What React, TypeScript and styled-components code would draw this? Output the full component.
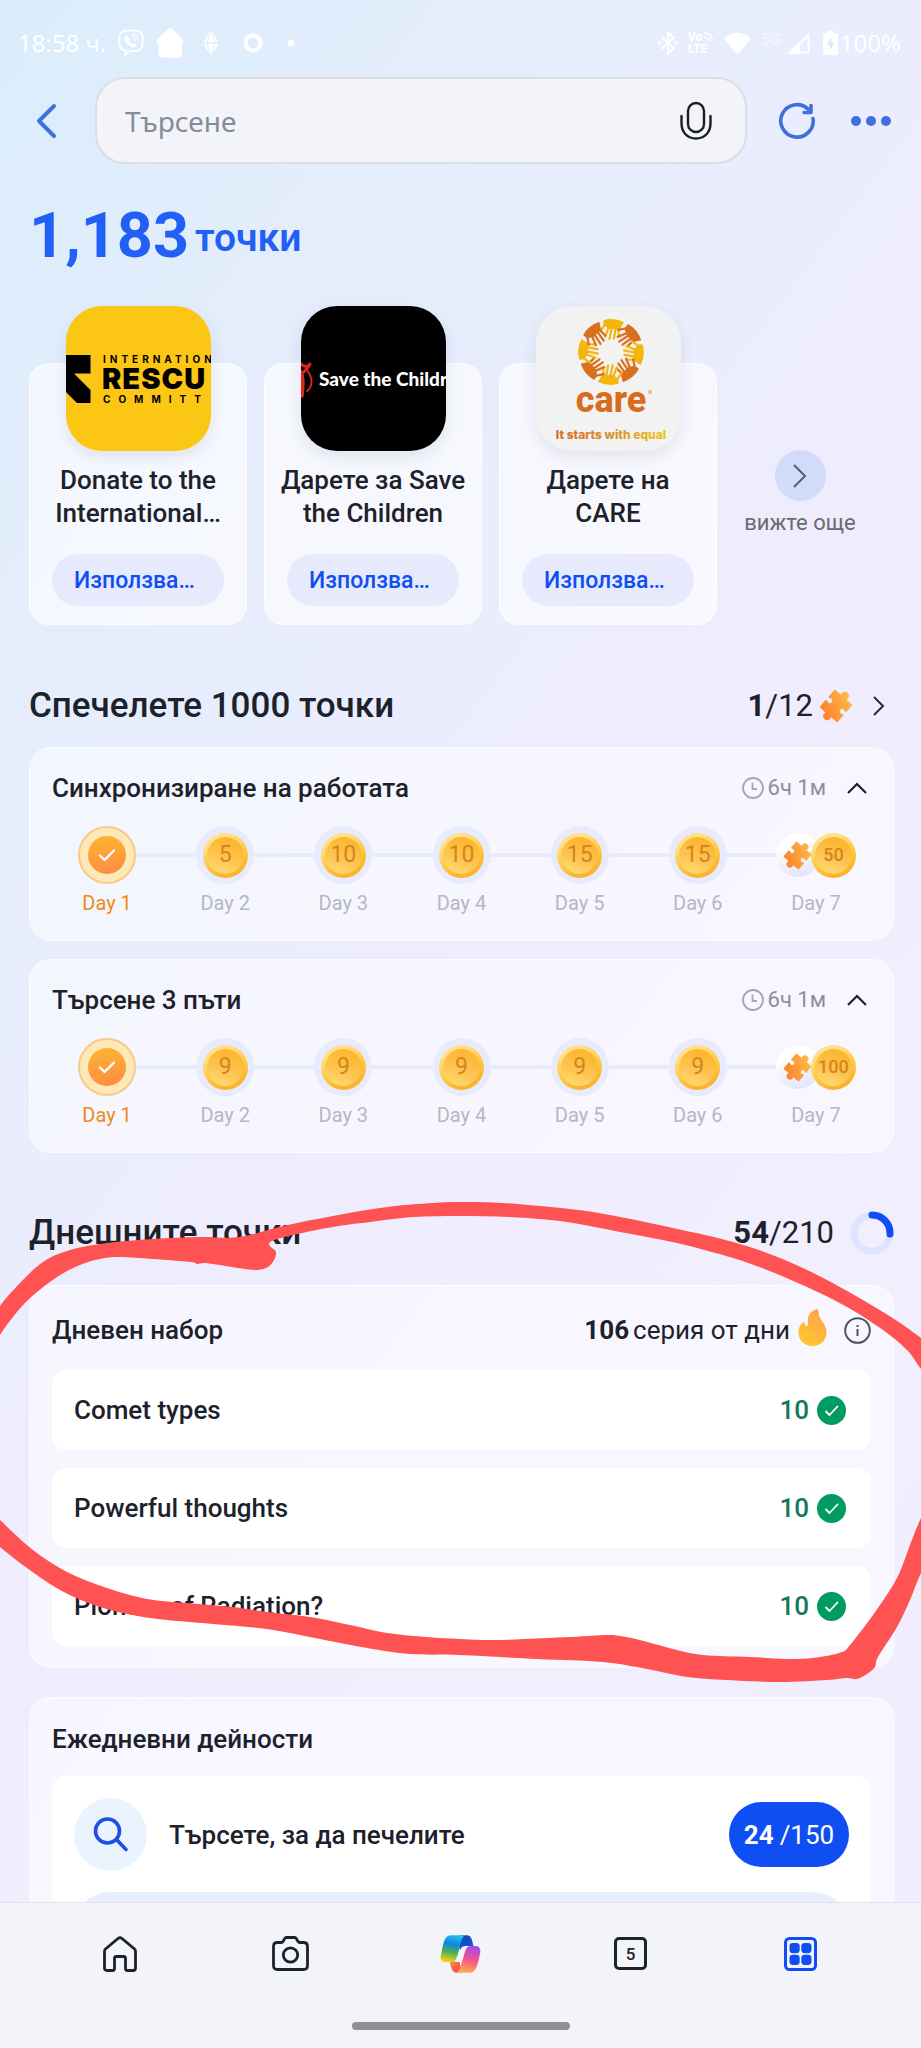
import React, { useId } from 'react';
import styled, { createGlobalStyle, css } from 'styled-components';

const ink = '#1d212b';
const blue = '#0f4ef2';
const lilac = '#e8ebfd';

const GlobalStyle = createGlobalStyle`
  *, *::before, *::after { box-sizing: border-box; }
  body {
    margin: 0;
    font-family: Roboto, "Noto Sans", sans-serif;
    color: ${ink};
  }
  h1, h2, h3, p, ul, ol { margin: 0; padding: 0; }
  ul, ol { list-style: none; }
  button, input { font: inherit; color: inherit; }
  button { border: 0; padding: 0; background: none; cursor: pointer; }
  svg { display: block; flex: none; }
`;

/* ---------- shell ---------- */

const Screen = styled.div`
  display: flex;
  flex-direction: column;
  height: 100vh;
  overflow: hidden;
  background: linear-gradient(127deg, #daedfb 0%, #e4edfc 20%, #eaedfd 38%, #efecfd 50%, #f1eefe 70%, #f0edfe 100%);
`;

const StatusBar = styled.div`
  display: flex;
  align-items: center;
  justify-content: space-between;
  padding: 27px 20px 18px 18px;
  color: #fff;
  font-family: "Noto Sans", sans-serif;
  font-size: 24px;
  line-height: 32px;
`;

const StatusGroup = styled.div<{ $gap: number; $left?: number }>`
  display: flex;
  align-items: center;
  gap: ${(p) => p.$gap}px;
  margin-left: ${(p) => p.$left ?? 0}px;
`;

const TopBar = styled.header`
  display: flex;
  align-items: stretch;
  height: 87px;
`;

const BackButton = styled.button`
  width: 95px;
  display: flex;
  align-items: center;
  padding-left: 34px;
`;

const SearchBox = styled.label`
  flex: 1;
  min-width: 0;
  display: flex;
  align-items: center;
  padding: 0 32px 0 26px;
  border: 2px solid #dcdde3;
  border-radius: 30px;
  background: #f3f4f9;
`;

const SearchInput = styled.input`
  flex: 1;
  min-width: 0;
  border: 0;
  outline: 0;
  background: none;
  font-family: "Noto Sans", sans-serif;
  font-size: 28px;
  &::placeholder { color: #858b9b; opacity: 1; }
`;

const TopActions = styled.div`
  display: flex;
  padding: 0 13px;
`;

const IconButton = styled.button`
  width: 74px;
  display: flex;
  align-items: center;
  justify-content: center;
`;

const Main = styled.main`
  flex: 1;
  min-height: 0;
  padding-top: 36px;
  overflow-x: hidden;
  overflow-y: auto;
  scrollbar-width: none;
`;

const Section = styled.section<{ $top: number }>`
  position: relative;
  margin-top: ${(p) => p.$top}px;
  padding: 0 27px 0 29px;
`;

/* ---------- points and offers ---------- */

const Points = styled.h1`
  display: flex;
  align-items: center;
  gap: 6px;
  padding: 0 29px;
  color: #215ff6;
  font-size: 63px;
  line-height: 72px;
  font-weight: 700;
`;

const PointsUnit = styled.span`
  font-size: 39px;
  line-height: 48px;
  padding-top: 4px;
  font-weight: 600;
`;

const Offers = styled.div`
  display: flex;
  gap: 17px;
`;

const Offer = styled.article`
  flex: 0 0 218px;
  margin-top: 57px;
  padding: 0 13px 18px;
  display: flex;
  flex-direction: column;
  align-items: center;
  border: 1px solid rgba(255, 255, 255, 0.6);
  border-radius: 20px;
  background: rgba(255, 255, 255, 0.62);
`;

const Logo = styled.div<{ $bg: string }>`
  width: 145px;
  height: 145px;
  margin-top: -58px;
  border-radius: 36px;
  overflow: hidden;
  background: ${(p) => p.$bg};
  box-shadow: 0 6px 16px rgba(40, 50, 100, 0.1);
`;

const OfferTitle = styled.h3`
  width: 190px;
  height: 66px;
  margin-top: 13px;
  text-align: center;
  font-size: 26px;
  line-height: 33px;
  font-weight: 500;
`;

const OfferButton = styled.button`
  align-self: stretch;
  height: 52px;
  margin: 24px 9px 0;
  padding: 0 22px;
  border-radius: 26px;
  background: #e7eafd;
  color: ${blue};
  font-size: 23px;
  font-weight: 500;
  text-align: left;
`;

const SeeMore = styled.a`
  flex: 1;
  min-width: 0;
  margin-top: 144px;
  padding-right: 28px;
  display: flex;
  flex-direction: column;
  align-items: center;
  gap: 8px;
  color: #6a6a6e;
  font-size: 22px;
  line-height: 28px;
  text-decoration: none;
  white-space: nowrap;
`;

const SeeMoreCircle = styled.span`
  display: grid;
  place-items: center;
  width: 51px;
  height: 51px;
  border-radius: 50%;
  background: #d3dbfa;
`;

/* ---------- shared headings and panels ---------- */

const SectionHead = styled.div`
  display: flex;
  align-items: center;
  justify-content: space-between;
  height: 44px;
`;

const SectionTitle = styled.h2`
  font-size: 35px;
  line-height: 44px;
  font-weight: 500;
`;

const Tally = styled.div<{ $gap: number; $right?: number }>`
  display: flex;
  align-items: center;
  gap: ${(p) => p.$gap}px;
  padding-right: ${(p) => p.$right ?? 0}px;
  font-size: 31px;
  line-height: 40px;
  b { font-weight: 700; }
`;

const ChevronButton = styled.button<{ $left: number }>`
  margin-left: ${(p) => p.$left}px;
`;

const Panel = styled.div<{ $top: number; $pad: string }>`
  margin-top: ${(p) => p.$top}px;
  padding: ${(p) => p.$pad};
  border: 1px solid rgba(255, 255, 255, 0.6);
  border-radius: 22px;
  background: rgba(255, 255, 255, 0.5);
`;

const PanelHead = styled.div`
  display: flex;
  align-items: center;
  justify-content: space-between;
  height: 32px;
`;

const PanelTitle = styled.h3`
  font-size: 26px;
  line-height: 32px;
  font-weight: 500;
`;

const TimeLeft = styled.div`
  display: flex;
  align-items: center;
  gap: 4px;
  padding-right: 4px;
  color: #8b8f9e;
  font-size: 22px;
  line-height: 32px;
`;

/* ---------- day track ---------- */

const Track = styled.ol`
  display: grid;
  grid-template-columns: repeat(7, 1fr);
  margin: 22px -4px 0;
`;

const DayMarker = styled.div`
  display: flex;
  align-items: center;
  justify-content: center;
  height: 58px;
`;

const Rail = styled.span<{ $hidden?: boolean }>`
  flex: 1;
  height: 4px;
  background: ${(p) => (p.$hidden ? 'transparent' : lilac)};
`;

const Halo = styled.span<{ $done?: boolean }>`
  display: grid;
  place-items: center;
  width: 58px;
  height: 58px;
  border-radius: 50%;
  background: ${lilac};
  ${(p) => p.$done && css`
    background: #fde8b8;
    border: 2px solid #fbc987;
  `}
`;

const DoneDisc = styled.span`
  display: grid;
  place-items: center;
  width: 38px;
  height: 38px;
  border-radius: 50%;
  background: linear-gradient(170deg, #fdb52f, #ff8a45);
`;

const Coin = styled.span<{ $small?: boolean }>`
  position: relative;
  display: grid;
  place-items: center;
  width: 45px;
  height: 45px;
  border-radius: 50%;
  background: linear-gradient(155deg, #ffe08a 20%, #ffc93f 55%, #fdb32c 80%);
  color: #d5851d;
  font-size: ${(p) => (p.$small ? 18 : 23)}px;
  line-height: 32px;
  font-weight: ${(p) => (p.$small ? 500 : 400)};
  &::before {
    content: "";
    position: absolute;
    inset: 4px;
    border-radius: 50%;
    background: linear-gradient(200deg, #fdb733 20%, #fec553 60%, #ffda70 90%);
  }
  span { position: relative; }
`;

const PuzzleDisc = styled.span`
  display: grid;
  place-items: center;
  width: 44px;
  height: 44px;
  margin-right: -9px;
  border-radius: 50%;
  background: linear-gradient(165deg, #ffffff 30%, #dfe3f7 95%);
`;

const DayLabel = styled.p<{ $active?: boolean }>`
  margin-top: 7px;
  text-align: center;
  font-size: 20px;
  line-height: 24px;
  color: ${(p) => (p.$active ? '#f08a16' : '#b5b7c3')};
`;

/* ---------- daily set ---------- */

const Streak = styled.div`
  display: flex;
  align-items: center;
  gap: 4px;
  font-size: 26px;
  line-height: 32px;
  b { font-weight: 700; }
`;

const FlameSlot = styled.span`
  padding: 0 13px 6px 4px;
`;

const TaskList = styled.ul`
  display: flex;
  flex-direction: column;
  gap: 18px;
  margin-top: 24px;
`;

const Task = styled.li`
  display: flex;
  align-items: center;
  justify-content: space-between;
  height: 80px;
  padding: 0 25px 0 22px;
  border-radius: 14px;
  background: #fff;
  font-size: 26px;
  line-height: 32px;
  font-weight: 500;
`;

const Earned = styled.span`
  display: flex;
  align-items: center;
  gap: 8px;
  color: #127a5b;
`;

const Marker = styled.svg`
  position: absolute;
  left: 0;
  top: -31px;
  width: 100%;
  pointer-events: none;
`;

/* ---------- activities ---------- */

const ActivityBox = styled.div`
  margin-top: 21px;
  padding: 22px 22px 40px;
  border-radius: 14px;
  background: #fff;
`;

const ActivityRow = styled.div`
  display: flex;
  align-items: center;
  gap: 22px;
  font-size: 26px;
  line-height: 32px;
  font-weight: 500;
`;

const ActivityIcon = styled.span`
  display: grid;
  place-items: center;
  width: 73px;
  height: 73px;
  border-radius: 50%;
  background: #e9f4ff;
`;

const ActivityName = styled.p`
  flex: 1;
`;

const Score = styled.span`
  display: flex;
  align-items: center;
  justify-content: center;
  gap: 6px;
  width: 120px;
  height: 65px;
  border-radius: 33px;
  background: ${blue};
  color: #fff;
  font-weight: 400;
  b { font-weight: 700; }
`;

const ActivityDetail = styled.div`
  height: 120px;
  margin-top: 21px;
  border-radius: 36px;
  background: #e8effc;
`;

/* ---------- bottom navigation ---------- */

const BottomBar = styled.footer`
  display: flex;
  flex-direction: column;
  align-items: center;
  height: 146px;
  border-top: 1px solid #e3e4e9;
  background: #f3f4f9;
`;

const Nav = styled.nav`
  align-self: stretch;
  display: grid;
  grid-template-columns: repeat(5, 1fr);
  height: 101px;
  padding: 0 35px;
`;

const NavButton = styled.button`
  display: grid;
  place-items: center;
`;

const TabCount = styled.span`
  display: grid;
  place-items: center;
  width: 33px;
  height: 33px;
  border: 3px solid ${ink};
  border-radius: 5px;
  font-size: 17px;
  line-height: 20px;
  font-weight: 500;
`;

const HomeHandle = styled.span`
  width: 218px;
  height: 8px;
  margin-top: 18px;
  border-radius: 4px;
  background: #8e9092;
`;

/* ---------- drawings ---------- */

const ViberIcon = () => (
  <svg width="26" height="28" viewBox="0 0 28 30" fill="none" stroke="#fff" strokeWidth="2">
    <path d="M9 1.500H19Q26.500 2 26.500 9V15Q26.500 23 19 23.500H13L8 28V23Q1.500 22 1.500 15V9Q1.500 2 9 1.500Z" />
    <path d="M9 7C6 9 7 12 10 15.500C13 19 17 21 20 18L17 15.500L15 16.500C13.500 16 12 14 11.500 12.500L12.500 10.500Z" fill="#fff" strokeWidth="1" />
    <path d="M15 6C19 6.500 21.500 9 22 13M15 9C17.500 9.500 18.500 11 19 13" strokeWidth="1.200" />
  </svg>
);

const HomeFilled = () => (
  <svg width="28" height="30" viewBox="0 0 28 30" fill="#fff">
    <path d="M11.500 1.200Q14-1 16.500 1.200L26.500 11Q28.500 14 26 15.500V25Q26 29.500 22 29.500H6.500Q2.500 29.500 2.500 25V16.500Q-1 15 1.500 11Z" />
  </svg>
);

const GemIcon = () => (
  <svg width="16" height="26" viewBox="0 0 16 26" fill="#fff">
    <path d="M7.500 0L3.500 12H0.500ZM8.500 0L12.500 12H15.500ZM8 1L11.300 12H4.700ZM0.500 13.500H3.500L7.500 26ZM15.500 13.500H12.500L8.500 26ZM4.700 13.500H11.300L8 25Z" />
  </svg>
);

const RingIcon = () => (
  <svg width="20" height="20" viewBox="0 0 20 20" fill="none" stroke="#fff" strokeWidth="4">
    <circle cx="10" cy="10" r="7.500" />
  </svg>
);

const DotIcon = () => (
  <svg width="8" height="8" viewBox="0 0 8 8" fill="#fff"><circle cx="4" cy="4" r="3.500" /></svg>
);

const BluetoothIcon = () => (
  <svg width="20" height="24" viewBox="0 0 20 24" fill="none" stroke="#fff" strokeWidth="2.200">
    <path d="M3.500 6L16 17.500L10 22V2L16 6.500L3.500 18" />
    <circle cx="1.500" cy="12" r="0.700" />
    <circle cx="18" cy="12" r="0.700" />
  </svg>
);

const VolteIcon = () => (
  <svg width="26" height="28" viewBox="0 0 26 28" fill="#fff" fontFamily="Roboto, sans-serif" fontWeight="700" fontSize="12">
    <text x="0" y="12">Vo</text>
    <text x="0" y="24">LTE</text>
    <path d="M16 4C21 4 24 7 24.500 12M16 8C19 8 20.500 10 21 12" fill="none" stroke="#fff" strokeWidth="1.600" />
  </svg>
);

const WifiIcon = () => (
  <svg width="27" height="23" viewBox="0 0 27 23" fill="#fff">
    <path d="M0 6.500Q13.500-5 27 6.500L13.500 23Z" />
  </svg>
);

const SignalIcon = () => (
  <svg width="50" height="28" viewBox="0 0 50 28">
    <text x="0" y="16" fill="#f4f4fd" fontFamily="Roboto, sans-serif" fontSize="16" fontWeight="500">5G</text>
    <path d="M47.500 6V23.500H29.500Z" fill="none" stroke="#fff" strokeWidth="2" />
    <path d="M26 25L39 12V25Z" fill="#fff" />
  </svg>
);

const BatteryIcon = () => (
  <svg width="15" height="24" viewBox="0 0 15 24">
    <path d="M4 0H11V2H13Q15 2 15 4V22Q15 24 13 24H2Q0 24 0 22V4Q0 2 2 2H4Z" fill="#fff" />
    <path d="M8.500 6L4 14H7V19L11.500 11.500H8.500Z" fill="#dfe3fb" />
  </svg>
);

const BackIcon = () => (
  <svg width="24" height="38" viewBox="0 0 24 38" fill="none" stroke="#3f70de" strokeWidth="4" strokeLinecap="round" strokeLinejoin="round">
    <path d="M20 4L5 19L20 34" />
  </svg>
);

const MicIcon = () => (
  <svg width="34" height="40" viewBox="0 0 34 40" fill="none" stroke="#1b1e26" strokeWidth="2.400" strokeLinecap="round">
    <rect x="9" y="2" width="16" height="29" rx="8" />
    <path d="M2.500 15V22C2.500 32 9 37.500 17 37.500S31.500 32 31.500 22V15" />
  </svg>
);

const RefreshIcon = () => (
  <svg width="38" height="38" viewBox="0 0 38 38" fill="none" stroke="#3f70de" strokeWidth="3.600" strokeLinecap="round" strokeLinejoin="round">
    <path d="M35 16.500A16.200 16.200 0 1 1 30 7" />
    <path d="M33 3.500V10.500H26" />
  </svg>
);

const MoreIcon = () => (
  <svg width="40" height="10" viewBox="0 0 40 10" fill="#3f70de">
    <circle cx="5" cy="5" r="5" /><circle cx="20" cy="5" r="5" /><circle cx="35" cy="5" r="5" />
  </svg>
);

const ChevronRight = ({ w, h, color, stroke }: { w: number; h: number; color: string; stroke: number }) => (
  <svg width={w} height={h} viewBox={`0 0 ${w} ${h}`} fill="none" stroke={color} strokeWidth={stroke}>
    <path d={`M1 1L${w - 2} ${h / 2}L1 ${h - 1}`} />
  </svg>
);

const ChevronUp = () => (
  <svg width="20" height="12" viewBox="0 0 20 12" fill="none" stroke={ink} strokeWidth="2.200">
    <path d="M1 11L10 2L19 11" />
  </svg>
);

const ClockIcon = () => (
  <svg width="22" height="22" viewBox="0 0 22 22" fill="none" stroke="#a3a6b3" strokeWidth="1.800">
    <circle cx="11" cy="11" r="10" />
    <path d="M10.500 5.500V12H15" />
  </svg>
);

const CheckIcon = ({ size, stroke }: { size: number; stroke: number }) => (
  <svg width={size} height={size} viewBox="0 0 18 18" fill="none" stroke="#fff" strokeWidth={stroke} strokeLinecap="round" strokeLinejoin="round">
    <path d="M2 9.500L6.500 14L16 4.500" />
  </svg>
);

const PuzzleIcon = ({ size }: { size: number }) => {
  const id = useId();
  return (
    <svg width={size} height={size} viewBox="0 0 24 24">
      <defs>
        <linearGradient id={id} gradientUnits="userSpaceOnUse" x1="5" y1="18" x2="14" y2="2">
          <stop offset="0" stopColor="#fd8730" />
          <stop offset="1" stopColor="#fdb544" />
        </linearGradient>
      </defs>
      <path
        transform="rotate(41 12 12)"
        fill={`url(#${id})`}
        stroke={`url(#${id})`}
        strokeWidth="1"
        strokeLinejoin="round"
        d="M4.200 4.200H10.200C10.200 3.600 9.700 3.300 9.700 2.500A2.300 2.300 0 0 1 14.300 2.500C14.300 3.300 13.800 3.600 13.800 4.200H19.800V10.300C18.900 10.300 18.600 9.800 17.800 9.800A2.200 2.200 0 0 0 17.800 14.200C18.600 14.200 18.900 13.700 19.800 13.700V19.800H13.800C13.800 20.400 14.300 20.700 14.300 21.500A2.300 2.300 0 0 1 9.700 21.500C9.700 20.700 10.200 20.400 10.200 19.800H4.200V13.700C5.100 13.700 5.400 14.200 6.200 14.200A2.200 2.200 0 0 0 6.200 9.800C5.400 9.800 5.100 10.300 4.200 10.300Z"
      />
    </svg>
  );
};

const ProgressRing = ({ value }: { value: number }) => (
  <svg width="44" height="44" viewBox="0 0 44 44" fill="none" strokeWidth="7">
    <circle cx="22" cy="22" r="18" stroke="#e0e3fd" />
    <circle cx="22" cy="22" r="18" stroke={blue} strokeLinecap="round" pathLength={100} strokeDasharray={`${value} 100`} transform="rotate(-90 22 22)" />
  </svg>
);

const FlameIcon = () => (
  <svg width="29" height="37" viewBox="0 0 29 37">
    <defs>
      <linearGradient id="flame" x1="0.700" y1="0" x2="0.200" y2="1">
        <stop offset="0" stopColor="#ffa24a" />
        <stop offset="1" stopColor="#ffc92b" />
      </linearGradient>
    </defs>
    <path fill="url(#flame)" d="M18 0.500C20 0 20.500 1 20.500 3C21 12 28.500 14 28.500 23C28.500 31.500 22.500 37 14.500 37S0.500 31.500 0.500 23.500C0.500 19 2 15.500 5 13.500C6.500 12.800 7 13.800 7 15C7.200 17 8.500 17.500 9.500 16.500C10.800 15 9.500 13 9.800 10C10.300 5 14 1.500 18 0.500Z" />
  </svg>
);

const InfoIcon = () => (
  <svg width="27" height="27" viewBox="0 0 27 27" fill="none" stroke="#4d5366" strokeWidth="2">
    <circle cx="13.500" cy="13.500" r="12.300" />
    <path d="M13.500 12V19M13.500 8V10" />
  </svg>
);

const GreenCheck = () => (
  <svg width="29" height="29" viewBox="0 0 29 29">
    <circle cx="14.500" cy="14.500" r="14.500" fill="#009a63" />
    <path d="M9 15.500L12.500 19L20.500 10.500" fill="none" stroke="#fff" strokeWidth="1.800" strokeLinecap="round" strokeLinejoin="round" />
  </svg>
);

const SearchIcon = () => (
  <svg width="42" height="42" viewBox="0 0 42 42" fill="none" stroke="#1b4fe8" strokeWidth="3.600" strokeLinecap="round">
    <circle cx="17.500" cy="17" r="12" />
    <path d="M26.500 25.500L36 35.500" />
  </svg>
);

const HomeIcon = () => (
  <svg width="34" height="36" viewBox="0 0 34 36" fill="none" stroke={ink} strokeWidth="2.800" strokeLinejoin="round">
    <path d="M15 2.500Q17 1 19 2.500L31.500 13Q32.500 14 32.500 15.500V32Q32.500 34.500 30 34.500H24.500Q22.500 34.500 22.500 32.500V22.500Q22.500 20.500 20.500 20.500H13.500Q11.500 20.500 11.500 22.500V32.500Q11.500 34.500 9.500 34.500H4Q1.500 34.500 1.500 32V15.500Q1.500 14 2.500 13Z" />
  </svg>
);

const CameraIcon = () => (
  <svg width="37" height="35" viewBox="0 0 37 35" fill="none" stroke={ink} strokeWidth="2.800" strokeLinejoin="round">
    <path d="M5.500 6.500H9Q10.500 6.500 11.300 5L12.500 2.800Q13.200 1.500 14.500 1.500H22.500Q23.800 1.500 24.500 2.800L25.700 5Q26.500 6.500 28 6.500H31.500Q35.500 6.500 35.500 10.500V29.500Q35.500 33.500 31.500 33.500H5.500Q1.500 33.500 1.500 29.500V10.500Q1.500 6.500 5.500 6.500Z" />
    <circle cx="18.500" cy="19" r="7.200" />
  </svg>
);

const CopilotIcon = () => (
  <svg width="41" height="38" viewBox="-1 -1 122 114">
    <defs>
      <linearGradient id="cpLeft" x1="0.600" y1="0" x2="0.400" y2="1">
        <stop offset="0" stopColor="#22c0f4" /><stop offset="0.350" stopColor="#0f86dc" />
        <stop offset="0.650" stopColor="#4fb056" /><stop offset="1" stopColor="#f8cf0c" />
      </linearGradient>
      <linearGradient id="cpRight" x1="0.600" y1="0" x2="0.400" y2="1">
        <stop offset="0" stopColor="#a44bea" /><stop offset="0.500" stopColor="#f2558c" /><stop offset="1" stopColor="#ffad4b" />
      </linearGradient>
      <linearGradient id="cpTop" x1="0" y1="0" x2="1" y2="1">
        <stop offset="0" stopColor="#0c3fae" /><stop offset="1" stopColor="#1a63e0" />
      </linearGradient>
      <linearGradient id="cpBottom" x1="0" y1="0" x2="1" y2="1">
        <stop offset="0" stopColor="#fb9340" /><stop offset="1" stopColor="#ee3f4f" />
      </linearGradient>
    </defs>
    <path fill="url(#cpTop)" d="M58 0H79C92 0 95 14 99 32H82C70 32 66 38 60 46L50 20Z" />
    <path fill="url(#cpBottom)" d="M27 78C32 95 34 112 46 112H62L58 80Z" />
    <path fill="url(#cpLeft)" d="M30 0H76C66 2 63 14 56 42C50 62 48 80 34 80H14C2 80 -2 72 2 56C8 30 10 0 30 0Z" />
    <path fill="url(#cpRight)" d="M104 32C118 32 122 42 118 58C112 84 108 112 88 112H44C56 110 60 96 67 70C72 50 75 32 88 32Z" />
    <path fill="#f6f2fb" d="M76 32H86C76 36 73 50 69 64C66 76 60 81 48 80C54 70 56 54 60 42C63 35 68 32 76 32Z" />
  </svg>
);

const AppsIcon = () => (
  <svg width="33" height="34" viewBox="0 0 33 34">
    <rect x="1.500" y="1.500" width="30" height="31" rx="4" fill="none" stroke={blue} strokeWidth="3" />
    <g fill={blue}>
      <rect x="5.500" y="6" width="10.200" height="10.200" rx="3.400" />
      <rect x="17.300" y="6" width="10.200" height="10.200" rx="3.400" />
      <rect x="5.500" y="17.800" width="10.200" height="10.200" rx="3.400" />
      <rect x="17.300" y="17.800" width="10.200" height="10.200" rx="3.400" />
    </g>
  </svg>
);

const RescueLogo = () => (
  <svg width="145" height="145" viewBox="0 0 145 145" fontFamily="Inter, sans-serif">
    <path d="M0 49H24.500V67.500H8L24.500 84V97H11L0 86Z" />
    <text x="37" y="57" fontSize="10" fontWeight="700" letterSpacing="4">INTERNATION</text>
    <text x="36" y="83" fontSize="29" fontWeight="900" letterSpacing="1">RESCU</text>
    <text x="37" y="97" fontSize="10" fontWeight="700" letterSpacing="8">COMMITT</text>
  </svg>
);

const SaveLogo = () => (
  <svg width="145" height="145" viewBox="0 0 145 145">
    <g fill="none" stroke="#e0261c" strokeLinecap="round">
      <path d="M-2 56C3 62 7 61 9 58" strokeWidth="3" />
      <path d="M0 68C4 66 6 62 8 60" strokeWidth="3" />
      <path d="M6 64C12 72 12 80 6 85" strokeWidth="1.800" />
      <path d="M0 66C3 72 2 82 1 90" strokeWidth="3.500" />
    </g>
    <text x="18" y="80" fill="#fff" fontFamily="Lato, sans-serif" fontSize="19" fontWeight="900">Save the Childr</text>
  </svg>
);

const CareLogo = () => (
  <svg width="145" height="145" viewBox="0 0 145 145">
    <defs>
      <linearGradient id="careText" x1="0" y1="0" x2="1" y2="0">
        <stop offset="0" stopColor="#d96b1c" /><stop offset="0.600" stopColor="#dc9a2a" /><stop offset="1" stopColor="#ecc317" />
      </linearGradient>
    </defs>
    {Array.from({ length: 8 }, (_, i) => {
      const c = i % 2 ? '#db701c' : '#f3b50e';
      return (
        <g key={i} transform={`translate(75 46) rotate(${i * 45 + 4})`} fill={c} stroke={c} strokeLinecap="round">
          <path d="M-10 -31Q0 -35 11 -30.500L7 -23L-4 -23L-9 -26Z" stroke="none" />
          <path d="M-4 -24L-7 -15M-1 -24L-2.500 -13M3 -24L2 -13.500M6 -25L6.500 -16M-8 -27L-12 -20" strokeWidth="2.200" fill="none" />
        </g>
      );
    })}
    <text x="75" y="106" textAnchor="middle" fill="#d96b1c" fontFamily="Roboto, sans-serif" fontSize="36" fontWeight="800">care</text>
    <circle cx="114" cy="86" r="2" fill="#eab68d" />
    <text x="75" y="133" textAnchor="middle" fill="url(#careText)" fontFamily="Inter, sans-serif" fontSize="12" fontWeight="800">It starts with equal</text>
  </svg>
);

/* Closed smooth outline through the given points (Catmull-Rom to Bezier). */
type Pt = [number, number];
const smooth = (pts: Pt[]) => {
  const n = pts.length;
  const at = (i: number) => pts[(i + n) % n];
  let d = `M${pts[0][0]} ${pts[0][1]}`;
  for (let i = 0; i < n; i++) {
    const [a, b, c, e] = [at(i - 1), at(i), at(i + 1), at(i + 2)];
    d += `C${b[0] + (c[0] - a[0]) / 6} ${b[1] + (c[1] - a[1]) / 6} ${c[0] - (e[0] - b[0]) / 6} ${c[1] - (e[1] - b[1]) / 6} ${c[0]} ${c[1]}`;
  }
  return `${d}Z`;
};

const upperStroke: Pt[] = [
  [-20, 158], [0, 126], [20, 103], [43, 82], [70, 70], [107, 63], [153, 59], [200, 57], [240, 57], [283, 46], [333, 36],
  [387, 27], [433, 23], [460, 22], [503, 23], [570, 29], [610, 35], [673, 48], [733, 62], [780, 78], [827, 100],
  [883, 132], [921, 158], [945, 180], [945, 220], [921, 189], [907, 170], [883, 150], [847, 127], [807, 107],
  [767, 90], [733, 78], [677, 63], [620, 52], [567, 42], [510, 37], [460, 36], [413, 37], [370, 42], [327, 48],
  [272, 61], [276, 72], [274, 80], [268, 87], [258, 90], [245, 89], [213, 84], [203, 83], [197, 84], [191, 82], [153, 79],
  [120, 77], [100, 79], [80, 85], [57, 97], [30, 118], [13, 137], [0, 155], [-20, 188],
];

const lowerStroke: Pt[] = [
  [-20, 348], [0, 367], [27, 388], [60, 410], [100, 427], [150, 438], [213, 444], [267, 449], [320, 459], [367, 468],
  [410, 474], [460, 475], [537, 479], [603, 482], [647, 489], [687, 497], [727, 500], [780, 502], [827, 500],
  [847, 498], [857, 499], [867, 494], [875, 487], [878, 477], [897, 447], [910, 420], [921, 393], [945, 345],
  [945, 290], [921, 338], [910, 365], [897, 398], [873, 435], [850, 465], [842, 472], [820, 477], [793, 479],
  [750, 477], [703, 475], [673, 469], [640, 460], [620, 456], [607, 455], [570, 457], [497, 460], [460, 459],
  [427, 457], [387, 453], [350, 445], [310, 437], [267, 432], [233, 427], [187, 423], [147, 419], [107, 408],
  [67, 392], [33, 370], [0, 340], [-20, 320],
];

const RedCircle = () => (
  <Marker viewBox="0 0 921 520" aria-hidden="true" fill="#ff5252">
    <path d={smooth(upperStroke)} />
    <path d={smooth(lowerStroke)} />
  </Marker>
);

/* ---------- data ---------- */

const offers = [
  { title: 'Donate to the International…', bg: '#fcc615', logo: <RescueLogo /> },
  { title: 'Дарете за Save the Children', bg: '#000', logo: <SaveLogo /> },
  { title: 'Дарете на CARE', bg: '#f2f2f3', logo: <CareLogo /> },
];

const streaks = [
  { title: 'Синхронизиране на работата', days: [0, 5, 10, 10, 15, 15, 50], top: 19 },
  { title: 'Търсене 3 пъти', days: [0, 9, 9, 9, 9, 9, 100], top: 18 },
];

const tasks = ['Comet types', 'Powerful thoughts', 'Pioneer of Radiation?'];

const StreakPanel = ({ title, days, top }: { title: string; days: number[]; top: number }) => (
  <Panel $top={top} $pad="24px 22px 25px">
    <PanelHead>
      <PanelTitle>{title}</PanelTitle>
      <TimeLeft>
        <ClockIcon />
        <span>6ч 1м</span>
        <ChevronButton $left={17} aria-label="Свиване"><ChevronUp /></ChevronButton>
      </TimeLeft>
    </PanelHead>
    <Track>
      {days.map((points, i) => (
        <li key={i}>
          <DayMarker>
            <Rail $hidden={i === 0} />
            {i === 0 && <Halo $done><DoneDisc><CheckIcon size={18} stroke={2.4} /></DoneDisc></Halo>}
            {i > 0 && i < 6 && <Halo><Coin><span>{points}</span></Coin></Halo>}
            {i === 6 && (
              <>
                <PuzzleDisc><PuzzleIcon size={29} /></PuzzleDisc>
                <Coin $small><span>{points}</span></Coin>
              </>
            )}
            <Rail $hidden={i === 6} />
          </DayMarker>
          <DayLabel $active={i === 0}>Day {i + 1}</DayLabel>
        </li>
      ))}
    </Track>
  </Panel>
);

export default function App() {
  return (
    <Screen>
      <GlobalStyle />
      <StatusBar>
        <StatusGroup $gap={12}>
          <span>18:58 ч.</span>
          <ViberIcon />
          <HomeFilled />
          <StatusGroup $gap={24} $left={7}>
            <GemIcon />
            <RingIcon />
            <DotIcon />
          </StatusGroup>
        </StatusGroup>
        <StatusGroup $gap={10}>
          <BluetoothIcon />
          <VolteIcon />
          <WifiIcon />
          <SignalIcon />
          <StatusGroup $gap={2} $left={2}>
            <BatteryIcon />
            <span>100%</span>
          </StatusGroup>
        </StatusGroup>
      </StatusBar>

      <TopBar>
        <BackButton aria-label="Назад"><BackIcon /></BackButton>
        <SearchBox>
          <SearchInput type="search" placeholder="Търсене" aria-label="Търсене" />
          <MicIcon />
        </SearchBox>
        <TopActions>
          <IconButton aria-label="Обновяване"><RefreshIcon /></IconButton>
          <IconButton aria-label="Още"><MoreIcon /></IconButton>
        </TopActions>
      </TopBar>

      <Main>
        <Points>1,183<PointsUnit>точки</PointsUnit></Points>

        <Section $top={34}>
          <Offers>
            {offers.map((o) => (
              <Offer key={o.title}>
                <Logo $bg={o.bg}>{o.logo}</Logo>
                <OfferTitle>{o.title}</OfferTitle>
                <OfferButton>Използва…</OfferButton>
              </Offer>
            ))}
            <SeeMore href="#more">
              <SeeMoreCircle><ChevronRight w={14} h={24} color="#5c5f68" stroke={2} /></SeeMoreCircle>
              вижте още
            </SeeMore>
          </Offers>
        </Section>

        <Section $top={59}>
          <SectionHead>
            <SectionTitle>Спечелете 1000 точки</SectionTitle>
            <Tally $gap={6} $right={9}>
              <span><b>1</b>/12</span>
              <PuzzleIcon size={34} />
              <ChevronButton $left={14} aria-label="Напред"><ChevronRight w={12} h={20} color="#232a4d" stroke={2} /></ChevronButton>
            </Tally>
          </SectionHead>
          {streaks.map((s) => <StreakPanel key={s.title} {...s} />)}
        </Section>

        <Section $top={58}>
          <SectionHead>
            <SectionTitle>Днешните точки</SectionTitle>
            <Tally $gap={16}>
              <span><b>54</b>/210</span>
              <ProgressRing value={26} />
            </Tally>
          </SectionHead>
          <Panel $top={30} $pad="28px 22px 21px">
            <PanelHead>
              <PanelTitle>Дневен набор</PanelTitle>
              <Streak>
                <b>106</b>
                <span>серия от дни</span>
                <FlameSlot><FlameIcon /></FlameSlot>
                <button aria-label="Информация"><InfoIcon /></button>
              </Streak>
            </PanelHead>
            <TaskList>
              {tasks.map((t) => (
                <Task key={t}>
                  {t}
                  <Earned>10 <GreenCheck /></Earned>
                </Task>
              ))}
            </TaskList>
          </Panel>
          <RedCircle />
        </Section>

        <Section $top={29}>
          <Panel $top={0} $pad="25px 22px 21px">
            <PanelHead><PanelTitle>Ежедневни дейности</PanelTitle></PanelHead>
            <ActivityBox>
              <ActivityRow>
                <ActivityIcon><SearchIcon /></ActivityIcon>
                <ActivityName>Търсете, за да печелите</ActivityName>
                <Score><b>24</b>/150</Score>
              </ActivityRow>
              <ActivityDetail />
            </ActivityBox>
          </Panel>
        </Section>
      </Main>

      <BottomBar>
        <Nav>
          <NavButton aria-label="Начало"><HomeIcon /></NavButton>
          <NavButton aria-label="Камера"><CameraIcon /></NavButton>
          <NavButton aria-label="Copilot"><CopilotIcon /></NavButton>
          <NavButton aria-label="Раздели"><TabCount>5</TabCount></NavButton>
          <NavButton aria-label="Приложения"><AppsIcon /></NavButton>
        </Nav>
        <HomeHandle />
      </BottomBar>
    </Screen>
  );
}
